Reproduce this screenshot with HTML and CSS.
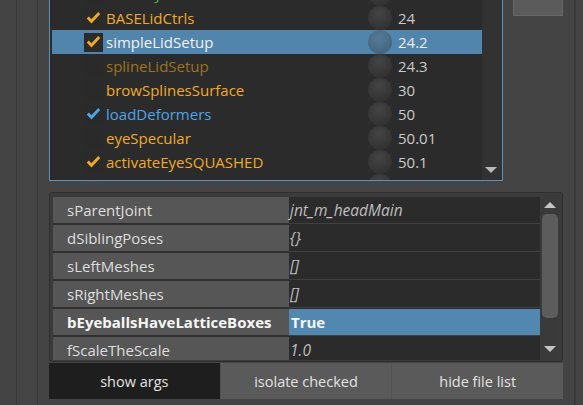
FILE: index.html
```html
<!DOCTYPE html>
<html>
<head>
<meta charset="utf-8">
<link rel="stylesheet" href="styles.css">
</head>
<body>
<div class="frame">
  <div class="gut g1"></div><div class="vline"></div><div class="gut g2"></div><div class="vline"></div><div class="gut g3"></div>
  <div class="main">
    <div class="top">
      <div class="list">
        <div class="rows">
          <div class="row green"><span class="cb"></span><span class="name">defAimJoints</span><span class="ball"></span><span class="num">15</span></div>
          <div class="row orange"><span class="cb"><svg class="tick" viewBox="0 0 16 14"><path d="M0.8 7.4 L3 5.4 L5.8 8.4 L13 0.6 L15.2 2.6 L5.8 12.8 Z"/></svg></span><span class="name">BASELidCtrls</span><span class="ball"></span><span class="num">24</span></div>
          <div class="row orange sel"><span class="cb box"><svg class="tick" viewBox="0 0 16 14"><path d="M0.8 7.4 L3 5.4 L5.8 8.4 L13 0.6 L15.2 2.6 L5.8 12.8 Z"/></svg></span><span class="name">simpleLidSetup</span><span class="ball"></span><span class="num">24.2</span></div>
          <div class="row dim"><span class="cb"></span><span class="name">splineLidSetup</span><span class="ball"></span><span class="num">24.3</span></div>
          <div class="row orange"><span class="cb"></span><span class="name">browSplinesSurface</span><span class="ball"></span><span class="num">30</span></div>
          <div class="row blue"><span class="cb"><svg class="tick" viewBox="0 0 16 14"><path d="M0.8 7.4 L3 5.4 L5.8 8.4 L13 0.6 L15.2 2.6 L5.8 12.8 Z"/></svg></span><span class="name">loadDeformers</span><span class="ball"></span><span class="num">50</span></div>
          <div class="row orange"><span class="cb"></span><span class="name">eyeSpecular</span><span class="ball"></span><span class="num">50.01</span></div>
          <div class="row orange"><span class="cb"><svg class="tick" viewBox="0 0 16 14"><path d="M0.8 7.4 L3 5.4 L5.8 8.4 L13 0.6 L15.2 2.6 L5.8 12.8 Z"/></svg></span><span class="name">activateEyeSQUASHED</span><span class="ball"></span><span class="num">50.1</span></div>
          <div class="row orange"><span class="cb"></span><span class="name"></span><span class="ball"></span><span class="num"></span></div>
        </div>
        <div class="lscroll"><span class="arrow-down"></span></div>
      </div>
      <div class="spacer"></div>
      <div class="outer-scroll"><div class="handle"></div></div>
    </div>
    <div class="table">
      <div class="grid">
        <div class="trow"><div class="key">sParentJoint</div><div class="val">jnt_m_headMain</div></div>
        <div class="trow"><div class="key">dSiblingPoses</div><div class="val">{}</div></div>
        <div class="trow"><div class="key">sLeftMeshes</div><div class="val">[]</div></div>
        <div class="trow"><div class="key">sRightMeshes</div><div class="val">[]</div></div>
        <div class="trow tsel"><div class="key">bEyeballsHaveLatticeBoxes</div><div class="val">True</div></div>
        <div class="trow"><div class="key">fScaleTheScale</div><div class="val">1.0</div></div>
      </div>
      <div class="tscroll">
        <span class="arrow-up"></span>
        <div class="thandle"></div>
        <span class="arrow-down2"></span>
      </div>
    </div>
    <div class="buttons">
      <div class="btn on">show args</div>
      <div class="btn">isolate checked</div>
      <div class="btn">hide file list</div>
    </div>
  </div>
  <div class="gut g4"></div><div class="vline2"></div><div class="gut g5"></div>
</div>
</body>
</html>
```

FILE: styles.css
```css
* { box-sizing: border-box; }
html, body { margin: 0; padding: 0; }
body {
  width: 583px;
  height: 405px;
  overflow: hidden;
  background: #444444;
  font-family: "Open Sans", "Noto Sans", sans-serif;
  font-size: 15px;
  color: #dddddd;
}
.frame { display: flex; height: 405px; }
.gut { background: #444444; }
.g1 { width: 16px; }
.g2 { width: 20px; background: #454545; }
.g3 { width: 11px; }
.g4 { width: 11px; }
.g5 { flex: 1; }
.vline { width: 1px; background: #3a3a3a; }
.vline2 { width: 2px; background: #393939; }

.main { width: 514px; display: flex; flex-direction: column; }

.top { display: flex; height: 181px; }
.list {
  width: 454px;
  display: flex;
  border: 1px solid #5e90b8;
  border-top: none;
  background: #2b2b2b;
}
.rows {
  flex: 1;
  overflow: hidden;
  padding-left: 2px;
}
.row {
  height: 24px;
  display: flex;
  align-items: center;
  padding-left: 32px;
  color: #f0aa2a;
}
.row:first-child { margin-top: -18px; }
.row.green { color: #52b04e; }
.row.dim { color: #9c741f; }
.row.blue { color: #4ea4e6; }
.row.sel { background: #5285ab; color: #f2f2f2; }
.cb {
  width: 19px;
  height: 19px;
  display: flex;
  align-items: center;
  justify-content: center;
  flex: none;
  background: #2a2a2a;
}
.row.sel .cb { background: #2b2b2b; }
.tick { width: 15px; height: 14px; fill: #f0aa2a; }
.row.blue .tick { fill: #4ea4e6; }
.name { width: 262px; margin-left: 3px; white-space: nowrap; }
.ball {
  width: 24px;
  height: 24px;
  border-radius: 50%;
  flex: none;
  background: radial-gradient(circle at 45% 35%, #444444 0%, #393939 45%, #303030 80%, #2c2c2c 100%);
}
.row.sel .ball {
  background: radial-gradient(circle at 45% 35%, #567a96 0%, #4a6d88 50%, #3f5f78 85%, #3c5a72 100%);
}
.num { margin-left: 6px; color: #c9c9c9; }
.row.sel .num { color: #ececec; }

.lscroll {
  width: 20px;
  background: #323232;
  display: flex;
  flex-direction: column;
  justify-content: flex-end;
  align-items: center;
  padding-bottom: 7px;
  padding-right: 2px;
}
.arrow-down {
  width: 0; height: 0;
  border-left: 6px solid transparent;
  border-right: 6px solid transparent;
  border-top: 6px solid #b8b8b8;
}
.spacer { width: 10px; }
.outer-scroll { width: 50px; }
.handle {
  height: 16px;
  background: #5b5b5b;
  border: 1px solid #676767;
  border-top: none;
}

.table {
  margin-top: 11px;
  height: 170px;
  border: 1px solid #2f2f2f;
  border-radius: 3px;
  background: #3b3b3b;
  padding: 4px 3px 1px 3px;
  display: flex;
}
.grid { width: 487px; overflow: hidden; background: #2b2b2b; }
.trow { display: flex; height: 28px; }
.key {
  width: 236px;
  background: #565656;
  border-bottom: 2px solid #2f2f2f;
  padding-left: 14px;
  line-height: 26px;
  color: #dedede;
  white-space: nowrap;
}
.val {
  width: 251px;
  border-bottom: 1px solid #404040;
  margin-bottom: 1px;
  padding-left: 1px;
  line-height: 26px;
  font-style: italic;
  font-size: 15.5px;
  color: #bdbdbd;
}
.tsel .key { font-weight: bold; color: #f6f6f6; }
.tsel .val { background: #5287b0; font-style: normal; font-weight: bold; font-size: 15px; color: #f6f6f6; padding-left: 2px; }

.tscroll {
  width: 19px;
  background: #3a3a3a;
  display: flex;
  flex-direction: column;
  align-items: center;
  padding-top: 5px;
}
.arrow-up {
  width: 0; height: 0;
  border-left: 6px solid transparent;
  border-right: 6px solid transparent;
  border-bottom: 6px solid #c4c4c4;
}
.thandle {
  margin-top: 6px;
  width: 16px;
  height: 104px;
  background: #5c5c5c;
  border-radius: 5px;
}
.arrow-down2 {
  margin-top: 28px;
  width: 0; height: 0;
  border-left: 6px solid transparent;
  border-right: 6px solid transparent;
  border-top: 6px solid #c4c4c4;
}

.buttons { display: flex; height: 36px; margin-top: 1px; }
.btn {
  flex: 1;
  background: #5a5a5a;
  color: #e2e2e2;
  display: flex;
  align-items: center;
  justify-content: center;
  font-size: 14.5px;
}
.btn + .btn { border-left: 1px solid #525252; }
.btn.on { background: #1e1e1e; }
```
